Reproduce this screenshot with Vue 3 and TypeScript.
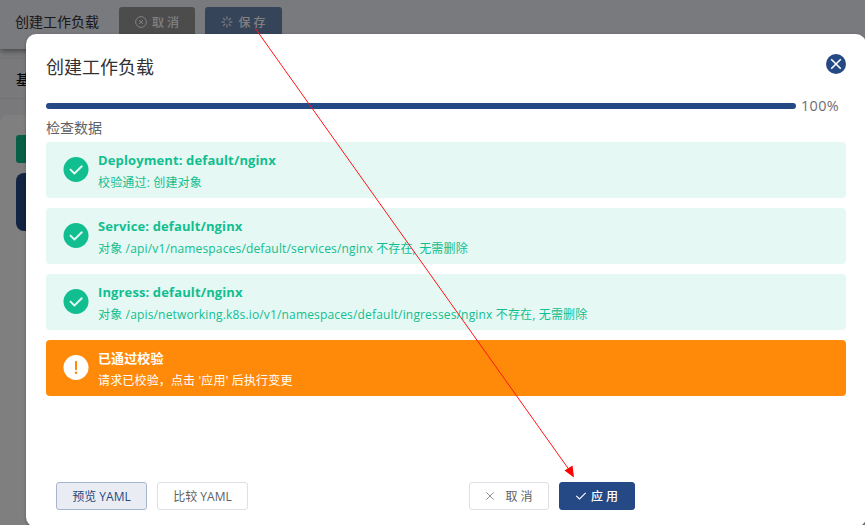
<script setup lang="ts">
interface CheckResult {
  title: string
  message: string
  kind: 'success' | 'warning'
}

const progress = 100

const results: CheckResult[] = [
  { title: 'Deployment: default/nginx', message: '校验通过: 创建对象', kind: 'success' },
  { title: 'Service: default/nginx', message: '对象 /api/v1/namespaces/default/services/nginx 不存在, 无需删除', kind: 'success' },
  { title: 'Ingress: default/nginx', message: '对象 /apis/networking.k8s.io/v1/namespaces/default/ingresses/nginx 不存在, 无需删除', kind: 'success' },
  { title: '已通过校验', message: "请求已校验，点击 '应用' 后执行变更", kind: 'warning' },
]

const spokes = [0, 45, 90, 135, 180, 225, 270, 315]
</script>

<template>
  <div class="screen">
    <div class="page">
      <header class="topbar">
        <span class="page-title">创建工作负载</span>
        <button class="top-btn top-cancel">
          <svg width="12" height="12" viewBox="0 0 12 12" fill="none" stroke="currentColor">
            <circle cx="6" cy="6" r="5.4" />
            <path d="M4 4l4 4M8 4l-4 4" />
          </svg>
          <span>取消</span>
        </button>
        <button class="top-btn top-save">
          <svg width="12" height="12" viewBox="0 0 12 12" fill="none" stroke="currentColor" stroke-width="1.2">
            <path v-for="a in spokes" :key="a" d="M6 .6v3" :transform="`rotate(${a} 6 6)`" />
          </svg>
          <span>保存</span>
        </button>
      </header>
      <div class="tabs"><span>基</span></div>
      <main class="content">
        <div class="block green"></div>
        <div class="block navy"></div>
      </main>
    </div>

    <div class="mask">
      <section class="dialog">
        <div class="dialog-head">
          <h1>创建工作负载</h1>
          <svg class="close" width="20" height="20" viewBox="0 0 20 20">
            <circle cx="10" cy="10" r="10" fill="#244985" />
            <path d="M5.2 5.2l9.6 9.6M14.800 5.200l-9.600 9.600" stroke="#fff" stroke-width="1.6" />
          </svg>
        </div>
        <div class="progress">
          <div class="track"><div class="bar" :style="{ width: `${progress}%` }"></div></div>
          <span class="percent">{{ progress }}%</span>
        </div>
        <div class="stage">检查数据</div>
        <div class="results">
          <div v-for="r in results" :key="r.title" class="alert" :class="r.kind">
            <svg v-if="r.kind === 'success'" width="26" height="26" viewBox="0 0 26 26">
              <circle cx="13" cy="12.5" r="12.5" fill="#11be8f" />
              <path d="M7.500 12.600l3.900 3.900 7.400-7.200" fill="none" stroke="#e5f8f4" stroke-width="1.9" stroke-linecap="round" stroke-linejoin="round" />
            </svg>
            <svg v-else width="26" height="26" viewBox="0 0 26 26">
              <circle cx="13" cy="12.500" r="12.500" fill="#fff" />
              <path d="M13 6.700v7.600" stroke="#ff8a09" stroke-width="2" stroke-linecap="round" />
              <circle cx="13" cy="17.800" r="1.300" fill="#ff8a09" />
            </svg>
            <div class="alert-text">
              <div class="alert-title">{{ r.title }}</div>
              <div class="alert-message">{{ r.message }}</div>
            </div>
          </div>
        </div>
        <footer class="actions">
          <button class="btn preview">预览 YAML</button>
          <button class="btn compare">比较 YAML</button>
          <button class="btn cancel">
            <svg width="12" height="12" viewBox="0 0 12 12" fill="none" stroke="#8f9093">
              <path d="M2.300 2.300l7.400 7.400M9.700 2.300l-7.400 7.400" />
            </svg>
            <span>取消</span>
          </button>
          <button class="btn apply">
            <svg width="12" height="12" viewBox="0 0 12 12" fill="none" stroke="#fff" stroke-width="1.1">
              <path d="M1.300 5.800l3.200 3.200 6.200-6.200" />
            </svg>
            <span>应用</span>
          </button>
        </footer>
      </section>
    </div>

    <svg class="arrow" width="865" height="525" viewBox="0 0 865 525">
      <path d="M255 28L570 471" stroke="#ff1414" stroke-width="1" />
      <path d="M574 477.500L564.500 470.500L572.500 465.500Z" fill="#ff0000" />
    </svg>
  </div>
</template>

<style>
body {
  margin: 0;
  overflow: hidden;
}
</style>

<style scoped>
.screen {
  position: relative;
  width: 865px;
  height: 525px;
  overflow: hidden;
  font-family: "Open Sans", "Noto Sans CJK SC", sans-serif;
}
.page {
  height: 525px;
  background: #f2f3f7;
}
.topbar {
  box-sizing: border-box;
  position: relative;
  display: flex;
  align-items: flex-start;
  height: 49px;
  padding: 7px 0 0 15px;
  background: #f3f4fa;
  box-shadow: 0 2px 6px rgba(0, 0, 0, 0.45);
}
.page-title {
  width: 104px;
  font-size: 14px;
  line-height: 30px;
  color: #303133;
}
button {
  box-sizing: border-box;
  display: flex;
  align-items: center;
  justify-content: center;
  margin: 0;
  padding: 0;
  border: 0;
  border-radius: 3px;
  font-family: inherit;
  font-size: 12px;
  white-space: nowrap;
}
button span {
  letter-spacing: 3px;
  margin-right: -3px;
}
.top-btn {
  height: 30px;
  gap: 5px;
  color: #fff;
  font-weight: 500;
}
.top-cancel {
  width: 76px;
  margin-right: 10px;
  background: #98989b;
}
.top-save {
  width: 77px;
  background: #6c88b5;
}
.tabs {
  box-sizing: border-box;
  height: 41px;
  margin-top: 9px;
  padding-left: 16px;
  border-top: 1px solid #e2e4ea;
  border-bottom: 1px solid #e2e4ea;
  font-size: 14px;
  font-weight: 500;
  line-height: 41px;
  color: #111;
}
.content {
  display: flex;
  flex-direction: column;
  gap: 10px;
  height: 500px;
  margin-top: 16px;
  padding: 20px 16px;
  border-radius: 8px;
  background: #fff;
}
.block {
  width: 200px;
}
.green {
  height: 28px;
  border-radius: 3px;
  background: #11be8f;
}
.navy {
  height: 58px;
  border-radius: 8px;
  background: #244985;
}
.mask {
  position: absolute;
  inset: 0;
  padding: 34px 0 0 26px;
  background: rgba(0, 0, 0, 0.5);
}
.dialog {
  box-sizing: border-box;
  width: 840px;
  height: 493px;
  padding: 20px 20px 0;
  border-radius: 10px;
  background: #fff;
  box-shadow: 0 1px 3px rgba(0, 0, 0, 0.3);
}
.dialog-head {
  display: flex;
  justify-content: space-between;
  height: 48px;
}
h1 {
  margin: 0;
  font-size: 18px;
  font-weight: 400;
  line-height: 26px;
  color: #303133;
}
.progress {
  display: flex;
  align-items: center;
  height: 8px;
}
.track {
  width: 750px;
  height: 6px;
  border-radius: 3px;
  background: #ebeef5;
}
.bar {
  height: 100%;
  border-radius: 3px;
  background: #244985;
}
.percent {
  margin-left: 5px;
  font-size: 14.4px;
  line-height: 1;
  letter-spacing: 0.35px;
  color: #6c6e72;
}
.stage {
  height: 32px;
  font-size: 14px;
  line-height: 36px;
  color: #606266;
}
.results {
  display: flex;
  flex-direction: column;
  gap: 10px;
}
.alert {
  box-sizing: border-box;
  display: flex;
  align-items: center;
  gap: 9px;
  height: 56px;
  padding-left: 17px;
  border-radius: 4px;
}
.success {
  color: #11be8f;
  background: #e5f8f4;
}
.warning {
  color: #fff;
  background: #ff8a09;
}
.alert-text {
  padding-top: 2px;
}
.alert-title {
  font-size: 13px;
  font-weight: 700;
  line-height: 20px;
  letter-spacing: 0.12px;
}
.alert-message {
  margin-top: 3px;
  font-size: 12px;
  line-height: 20px;
  letter-spacing: 0.16px;
}
.actions {
  display: flex;
  margin-top: 86px;
  padding-left: 10px;
}
.btn {
  height: 28px;
  border: 1px solid #dcdfe6;
  color: #606266;
  background: #fff;
}
.preview {
  width: 91px;
  margin-right: 10px;
  border-color: #a7b6ce;
  color: #244985;
  background: #e9edf3;
}
.compare {
  width: 91px;
}
.cancel {
  width: 80px;
  margin-left: 221px;
  gap: 9px;
}
.apply {
  width: 76px;
  margin-left: 10px;
  gap: 4px;
  border-color: #244985;
  color: #fff;
  font-weight: 500;
  background: #244985;
}
.cancel svg,
.apply svg {
  margin-left: -1px;
}
.arrow {
  position: absolute;
  inset: 0;
  pointer-events: none;
}
</style>
